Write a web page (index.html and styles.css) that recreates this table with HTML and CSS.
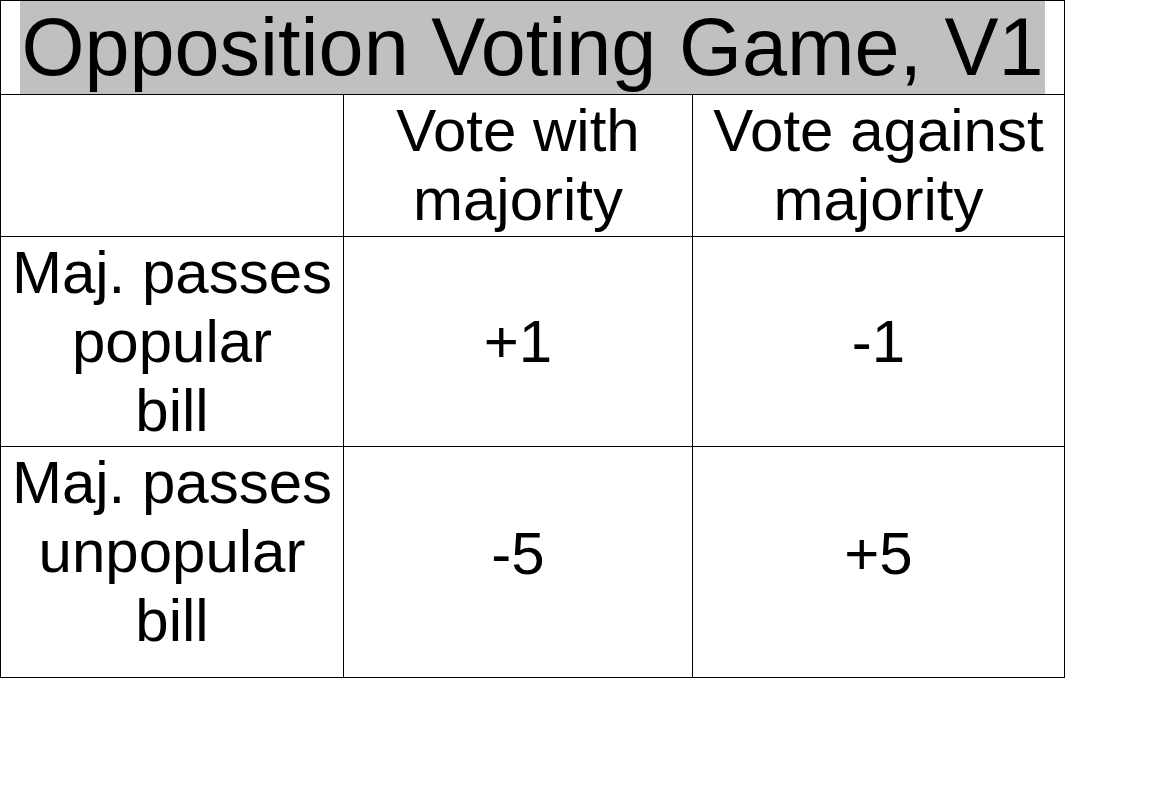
FILE: index.html
```html
<!DOCTYPE html>
<html>
<head>
<meta charset="utf-8">
<title>Opposition Voting Game, V1</title>
<link rel="stylesheet" href="styles.css">
</head>
<body>
<div class="game">
  <div class="cell title-cell"><span class="title">Opposition Voting Game, V1</span></div>
  <div class="cell"></div>
  <div class="cell head">Vote with<br>majority</div>
  <div class="cell head">Vote against<br>majority</div>
  <div class="cell label">Maj. passes<br>popular<br>bill</div>
  <div class="cell value">+1</div>
  <div class="cell value">-1</div>
  <div class="cell label">Maj. passes<br>unpopular<br>bill</div>
  <div class="cell value value-last">-5</div>
  <div class="cell value value-last">+5</div>
</div>
</body>
</html>
```

FILE: styles.css
```css
html, body {
  margin: 0;
  padding: 0;
  background: #ffffff;
}

body {
  font-family: "Liberation Sans", Arial, sans-serif;
  color: #000000;
}

.game {
  display: grid;
  grid-template-columns: 342px 348px 371px;
  grid-template-rows: 93px 141px 209px 230px;
  gap: 1px;
  padding: 1px;
  background: #000000;
  width: max-content;
}

.cell {
  background: #ffffff;
  font-size: 60px;
  line-height: 69px;
  text-align: center;
  white-space: nowrap;
}

.title-cell {
  grid-column: 1 / 4;
  display: flex;
  justify-content: center;
}

.title {
  display: inline-block;
  background: #c0c0c0;
  font-size: 81px;
  line-height: 92px;
  height: 93px;
  padding: 0 1px;
}

.head,
.label {
  padding-top: 1px;
}

.value {
  display: flex;
  align-items: center;
  justify-content: center;
}

.value-last {
  padding-bottom: 18px;
}
```
